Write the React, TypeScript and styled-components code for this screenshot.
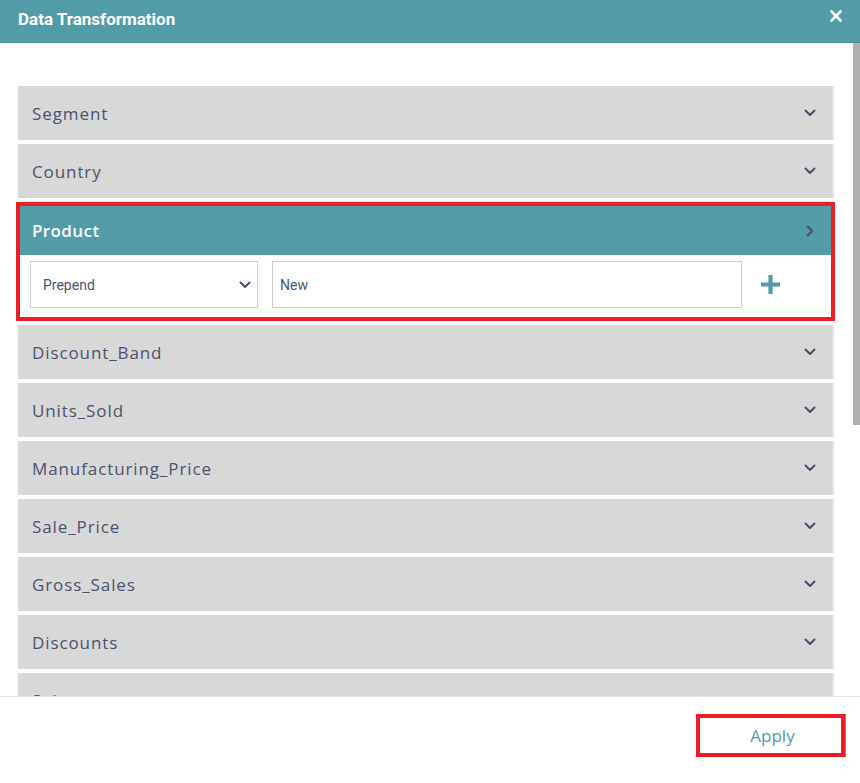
import styled, { createGlobalStyle } from 'styled-components';

const COLORS = {
  teal: '#519ca6',
  tealDark: '#4a8d96',
  item: '#d8d8d8',
  text: '#4c5270',
  red: '#ee1c25',
  border: '#cccccc',
};

const FIELDS = [
  'Segment',
  'Country',
  'Product',
  'Discount_Band',
  'Units_Sold',
  'Manufacturing_Price',
  'Sale_Price',
  'Gross_Sales',
  'Discounts',
  'Sales',
  'COGS',
  'Profit',
  'Date',
  'Month_Number',
  'Month_Name',
  'Year',
];

const GlobalStyle = createGlobalStyle`
  html, body {
    margin: 0;
    padding: 0;
    background: #ffffff;
  }
  * {
    box-sizing: border-box;
  }
`;

function ChevronDown() {
  return (
    <svg width="12" height="8" viewBox="0 0 12 8">
      <path
        d="M1.5 1.5 L6 6 L10.5 1.5"
        fill="none"
        stroke="#4a4e6a"
        strokeWidth="2"
        strokeLinecap="round"
        strokeLinejoin="round"
      />
    </svg>
  );
}

function ChevronRight() {
  return (
    <svg width="8" height="12" viewBox="0 0 8 12">
      <path
        d="M1.8 1.5 L6 6 L1.8 10.5"
        fill="none"
        stroke="#4a4e6a"
        strokeWidth="2"
        strokeLinecap="round"
        strokeLinejoin="round"
      />
    </svg>
  );
}

function App() {
  return (
    <>
      <GlobalStyle />
      <Modal>
        <Header>
          <Title>Data Transformation</Title>
          <CloseButton>
            <svg width="12" height="12" viewBox="0 0 12 12">
              <path
                d="M1.5 1.5 L10.5 10.5 M10.5 1.5 L1.5 10.5"
                stroke="#ffffff"
                strokeWidth="2.6"
                strokeLinecap="square"
              />
            </svg>
          </CloseButton>
        </Header>
        <Body>
          <Viewport>
            <List>
              {FIELDS.map((name) =>
                name === 'Product' ? (
                  <Expanded key={name}>
                    <ExpandedHead>
                      <HeadLabel>{name}</HeadLabel>
                      <ChevronRight />
                    </ExpandedHead>
                    <Controls>
                      <SelectBox>
                        <span>Prepend</span>
                        <ChevronDown />
                      </SelectBox>
                      <TextBox>New</TextBox>
                      <AddButton>
                        <svg width="21" height="21" viewBox="0 0 21 21">
                          <path
                            d="M10.5 1 V20 M1 10.5 H20"
                            stroke={COLORS.teal}
                            strokeWidth="4.2"
                          />
                        </svg>
                      </AddButton>
                    </Controls>
                  </Expanded>
                ) : (
                  <Item key={name}>
                    <ItemLabel>{name}</ItemLabel>
                    <ChevronDown />
                  </Item>
                )
              )}
            </List>
          </Viewport>
          <ScrollTrack>
            <ScrollThumb />
          </ScrollTrack>
        </Body>
        <Footer>
          <ApplyButton>Apply</ApplyButton>
        </Footer>
      </Modal>
    </>
  );
}

const Modal = styled.div`
  width: 860px;
  height: 783px;
  display: flex;
  flex-direction: column;
  background: #ffffff;
  overflow: hidden;
`;

const Header = styled.header`
  height: 43px;
  flex-shrink: 0;
  background: ${COLORS.teal};
  border-bottom: 1px solid ${COLORS.tealDark};
  display: flex;
  align-items: center;
  justify-content: space-between;
  padding: 0 18px 5px 18px;
`;

const Title = styled.h1`
  margin: 0;
  font-family: Roboto, 'Liberation Sans', sans-serif;
  font-size: 17px;
  font-weight: 700;
  color: #ffffff;
`;

const CloseButton = styled.div`
  display: flex;
  margin-top: -5px;
`;

const Body = styled.div`
  height: 653px;
  flex-shrink: 0;
  display: flex;
`;

const Viewport = styled.div`
  flex: 1;
  overflow: hidden;
`;

const ScrollTrack = styled.div`
  width: 7px;
  background: #ffffff;
`;

const ScrollThumb = styled.div`
  height: 382px;
  background: #b0b0b0;
`;

const List = styled.div`
  display: flex;
  flex-direction: column;
  gap: 4px;
  padding: 43px 19px 20px 18px;
`;

const Item = styled.div`
  height: 54px;
  flex-shrink: 0;
  background: ${COLORS.item};
  border-right: 2px solid #e2e2e2;
  display: flex;
  align-items: center;
  justify-content: space-between;
  padding: 0 16px 0 14px;
`;

const ItemLabel = styled.span`
  font-family: 'Open Sans', 'Liberation Sans', sans-serif;
  font-size: 17px;
  color: ${COLORS.text};
  letter-spacing: 0.9px;
`;

const Expanded = styled.div`
  margin: 0 -1px 0 -2px;
  border: 4px solid ${COLORS.red};
  background: #ffffff;
  display: flex;
  flex-direction: column;
`;

const ExpandedHead = styled.div`
  height: 49px;
  background: ${COLORS.teal};
  display: flex;
  align-items: center;
  justify-content: space-between;
  padding: 0 17px 0 12px;
`;

const HeadLabel = styled.span`
  font-family: 'Open Sans', 'Liberation Sans', sans-serif;
  font-size: 17px;
  font-weight: 600;
  color: #ffffff;
  letter-spacing: 0.4px;
`;

const Controls = styled.div`
  display: flex;
  align-items: center;
  gap: 14px;
  padding: 6px 0 9px 10px;
`;

const SelectBox = styled.div`
  width: 228px;
  height: 47px;
  border: 1px solid ${COLORS.border};
  display: flex;
  align-items: center;
  justify-content: space-between;
  padding: 0 6px 0 12px;
  font-family: Roboto, 'Liberation Sans', sans-serif;
  font-size: 14px;
  color: ${COLORS.text};
`;

const TextBox = styled.div`
  width: 470px;
  height: 47px;
  border: 1px solid ${COLORS.border};
  display: flex;
  align-items: center;
  padding: 0 7px;
  font-family: Roboto, 'Liberation Sans', sans-serif;
  font-size: 14px;
  color: ${COLORS.text};
`;

const AddButton = styled.div`
  display: flex;
  margin-left: 4px;
`;

const Footer = styled.footer`
  flex: 1;
  border-top: 1px solid #e4e4ec;
  display: flex;
  justify-content: flex-end;
  align-items: flex-start;
  padding: 17px 15px 0 0;
`;

const ApplyButton = styled.button`
  width: 149px;
  height: 43px;
  background: #ffffff;
  border: 4px solid ${COLORS.red};
  box-shadow: 1px 0 0 ${COLORS.teal};
  font-family: 'Open Sans', 'Liberation Sans', sans-serif;
  font-size: 17px;
  color: ${COLORS.teal};
  padding: 0 0 0 4px;
`;

export default App;
